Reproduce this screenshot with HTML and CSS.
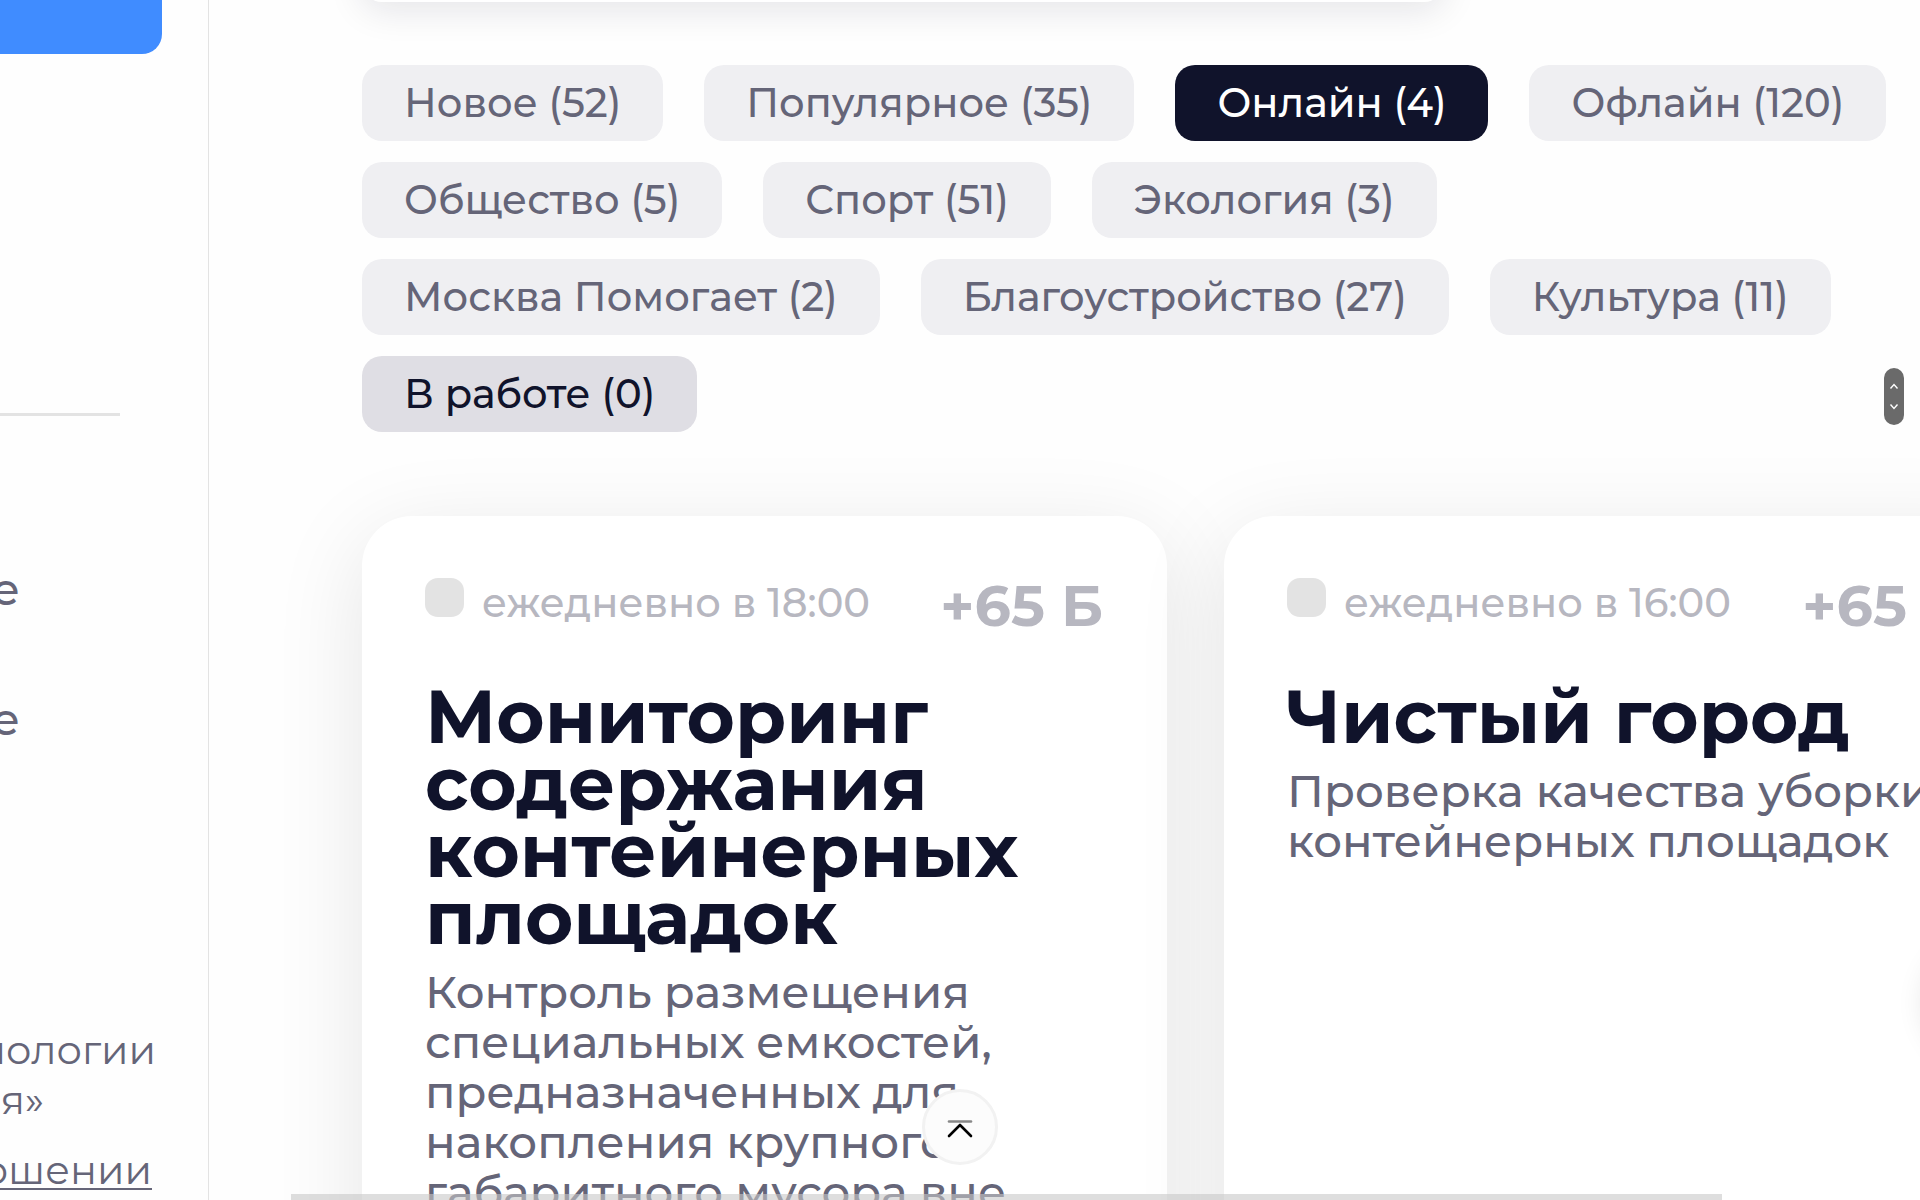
FILE: index.html
```html
<!DOCTYPE html>
<html lang="ru">
<head>
<meta charset="utf-8">
<meta name="viewport" content="width=device-width, initial-scale=1">
<title>Задания</title>
<link rel="stylesheet" href="styles.css">
</head>
<body>
<div class="layout">
  <aside class="sidebar">
    <div class="promo"></div>
    <hr class="divider">
    <nav class="menu">
      <a href="#">е</a>
      <a href="#">е</a>
    </nav>
    <footer class="legal">
      <p class="legal-line">нологии</p>
      <p class="legal-line legal-short">я»</p>
      <a class="legal-link" href="#">ошении</a>
    </footer>
  </aside>

  <main class="main">
    <div class="search-panel"></div>

    <div class="chips">
      <button type="button" class="chip">Новое (52)</button>
      <button type="button" class="chip">Популярное (35)</button>
      <button type="button" class="chip chip-active">Онлайн (4)</button>
      <button type="button" class="chip">Офлайн (120)</button>
      <button type="button" class="chip">Общество (5)</button>
      <button type="button" class="chip">Спорт (51)</button>
      <button type="button" class="chip">Экология (3)</button>
      <button type="button" class="chip">Москва Помогает (2)</button>
      <button type="button" class="chip">Благоустройство (27)</button>
      <button type="button" class="chip">Культура (11)</button>
      <button type="button" class="chip chip-own">В работе (0)</button>
    </div>

    <div class="cards">
      <article class="card">
        <header class="card-head">
          <span class="marker"></span>
          <span class="when">ежедневно в 18:00</span>
          <strong class="points">+65 Б</strong>
        </header>
        <h2 class="card-title">Мониторинг содержания контейнерных площадок</h2>
        <p class="card-text">Контроль размещения специальных емкостей, предназначенных для накопления крупного габаритного мусора вне</p>
      </article>
      <article class="card">
        <header class="card-head">
          <span class="marker"></span>
          <span class="when">ежедневно в 16:00</span>
          <strong class="points">+65 Б</strong>
        </header>
        <h2 class="card-title">Чистый город</h2>
        <p class="card-text">Проверка качества уборки контейнерных площадок</p>
      </article>
    </div>
  </main>
</div>

<div class="scroll-pill">
  <svg width="20" height="57" viewBox="0 0 20 57" fill="none" stroke="#fff" stroke-width="1.4">
    <path d="M6.5 20.5 10 16.5l3.5 4M6.5 36.5l3.5 4 3.5-4"/>
  </svg>
</div>
<div class="bottom-bar"></div>
<button type="button" class="to-top" aria-label="Наверх">
  <svg width="28" height="24" viewBox="0 0 28 24" fill="none" stroke-linecap="round" stroke-width="2.6">
    <path d="M3 6.5h22" stroke="#888"/>
    <path d="M3 21 14 10l11 11" stroke="#000" stroke-linejoin="round"/>
  </svg>
</button>
<button type="button" class="next" aria-label="Дальше"></button>
</body>
</html>
```
FILE: styles.css
```css
* { box-sizing: border-box; }

body {
  margin: 0;
  height: 100vh;
  overflow: hidden;
  background: #fefefe;
  color: #10132b;
  font-family: Montserrat, Inter, "Noto Sans", sans-serif;
  font-weight: 500;
}

.layout {
  display: grid;
  grid-template-columns: 209px minmax(0, 1fr);
  height: 100vh;
}

/* Sidebar */
.sidebar {
  display: flex;
  flex-direction: column;
  border-right: 1px solid #e3e3e3;
  color: #656578;
  overflow: hidden;
}

.promo {
  flex: none;
  height: 54px;
  margin-right: 46px;
  border-radius: 0 0 20px 0;
  background: #408cff;
}

.divider {
  width: 120px;
  height: 3px;
  margin: 359px 0 0;
  border: 0;
  background: #e3e3e3;
}

.menu {
  display: flex;
  flex-direction: column;
  align-items: flex-end;
  width: 20px;
  gap: 80px;
  margin-top: 148px;
  font-size: 45px;
  line-height: 50px;
}

.menu a {
  color: inherit;
  text-decoration: none;
}

.legal {
  display: flex;
  flex-direction: column;
  align-items: flex-end;
  width: 156px;
  margin-top: 281px;
  font-size: 40px;
  font-weight: 400;
  line-height: 50px;
}

.legal-line { margin: 0; }

.legal-short { margin-right: 112px; }

.legal-link {
  margin: 20px 4px 0 0;
  color: inherit;
  text-decoration-thickness: 2px;
  text-underline-offset: 4px;
}

/* Main column */
.main {
  padding-left: 153px;
  overflow: hidden;
}

.search-panel {
  width: 1082px;
  height: 60px;
  margin-top: -58px;
  border-radius: 20px;
  background: #fff;
  box-shadow: 0 8px 36px rgba(16, 19, 43, .11);
}

.chips {
  display: flex;
  flex-wrap: wrap;
  gap: 21px 41px;
  margin-top: 63px;
}

.chip {
  height: 76px;
  padding: 0 42px;
  border: 0;
  border-radius: 20px;
  background: #efeff2;
  color: #656578;
  font: inherit;
  font-size: 40px;
  line-height: 50px;
}

.chip-active {
  background: #10132b;
  color: #fff;
}

.chip-own {
  background: #dfdee4;
  color: #10132b;
}

/* Cards */
.cards {
  display: grid;
  grid-auto-flow: column;
  grid-auto-columns: 805px;
  gap: 57px;
  margin-top: 84px;
}

.card {
  min-height: 840px;
  padding: 62px 64px 62px 63px;
  border-radius: 50px;
  background: #fff;
  box-shadow: 0 20px 90px rgba(8, 8, 24, .1);
}

.card-head {
  display: flex;
  align-items: flex-start;
  height: 105px;
  color: #b7b7c0;
}

.marker {
  width: 39px;
  height: 39px;
  margin-right: 18px;
  border-radius: 13px;
  background: #e3e3e3;
}

.when {
  font-size: 40px;
  line-height: 50px;
}

.points {
  margin-left: auto;
  font-size: 57px;
  font-weight: 700;
  line-height: 56px;
}

.card-title {
  margin: 0;
  font-size: 74px;
  font-weight: 700;
  line-height: 67px;
}

.card-text {
  margin: 16px 0 0;
  color: #656578;
  font-size: 45px;
  line-height: 50px;
}

/* Floating controls */
.scroll-pill {
  position: fixed;
  top: 368px;
  right: 16px;
  width: 20px;
  height: 57px;
  border-radius: 10px;
  background: #6a6a6a;
}

.scroll-pill svg { display: block; }

.bottom-bar {
  position: fixed;
  right: 198px;
  bottom: 0;
  left: 291px;
  height: 6px;
  background: rgba(200, 200, 200, .6);
}

.to-top {
  position: fixed;
  bottom: 35px;
  left: calc(50% - 38px);
  display: grid;
  place-items: center;
  width: 76px;
  height: 76px;
  padding: 0;
  border: 3px solid #f2f2f2;
  border-radius: 50%;
  background: #fcfcfc;
}

.next {
  position: fixed;
  top: 943px;
  right: -126px;
  width: 120px;
  height: 120px;
  padding: 0;
  border: 0;
  border-radius: 50%;
  background: #fff;
  box-shadow: 0 0 30px rgba(0, 0, 0, .12);
}
```
